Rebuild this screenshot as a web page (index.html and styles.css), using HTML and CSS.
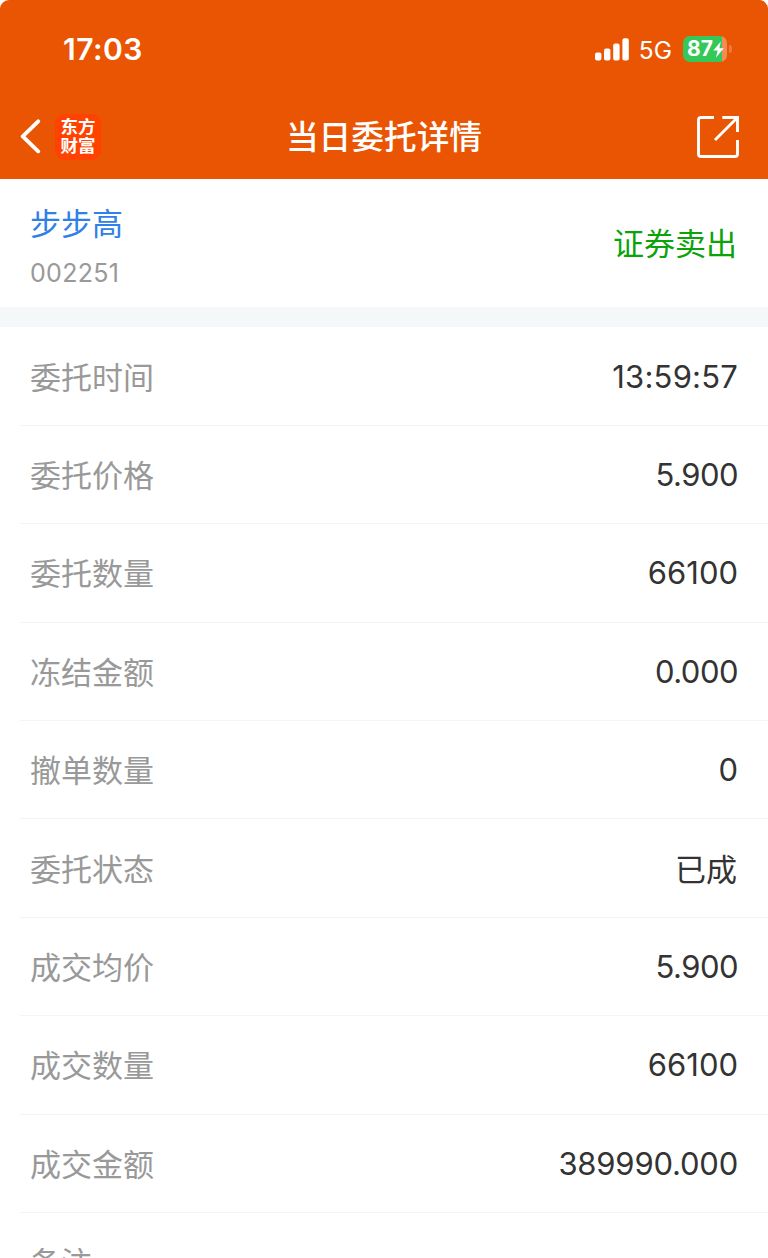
FILE: index.html
```html
<!DOCTYPE html>
<html lang="zh-CN">
<head>
	<meta charset="utf-8">
	<title>当日委托详情</title>

	<link rel="stylesheet" href="styles.css">
</head>
<body>
	<header class="header">
		<div class="status-bar">
			<span class="clock">17:03</span>
			<div class="indicators">
				<svg class="signal" width="34" height="23" viewBox="0 0 34 23" fill="#fff">
					<rect x="0" y="14.5" width="6.4" height="8" rx="2" />
					<rect x="9" y="10.5" width="6.4" height="12" rx="2" />
					<rect x="18.2" y="5.5" width="6.4" height="17" rx="2" />
					<rect x="27.4" y="0.3" width="6.4" height="22.2" rx="2" />
				</svg>
				<span class="network">5G</span>
				<div class="battery">
					<div class="battery-body">
						<span class="battery-level">87</span>
						<svg class="bolt" width="11" height="17" viewBox="0 0 11 17">
							<path d="M7.8 0.5 L0.3 9.6 H4.6 L3 16.5 L10.8 7.2 H6.4 Z" fill="#fff" />
						</svg>
					</div>
					<span class="battery-tip"></span>
				</div>
			</div>
		</div>
		<nav class="nav-bar">
			<div class="nav-left">
				<svg class="back" width="22" height="36" viewBox="0 0 22 36">
					<path d="M19.2 2.3 L3.7 17.3 L19.2 32.3" fill="none" stroke="#fff" stroke-width="3.9" stroke-linecap="round" stroke-linejoin="round" />
				</svg>
				<div class="logo"><span>东方</span><span>财富</span></div>
			</div>
			<h1 class="title">当日委托详情</h1>
			<svg class="share" width="42" height="42" viewBox="0 0 42 42" fill="none" stroke="#fff" stroke-width="2.9">
				<path d="M17 1.5 H4 Q1.5 1.5 1.5 4 V38 Q1.5 40.5 4 40.5 H38 Q40.5 40.5 40.5 38 V24" />
				<path d="M25.3 1.5 H40.5 V16" />
				<path d="M40 2 L18 24" />
			</svg>
		</nav>
	</header>

	<section class="stock">
		<div>
			<div class="stock-name">步步高</div>
			<div class="stock-code">002251</div>
		</div>
		<div class="direction">证券卖出</div>
	</section>

	<dl class="details">
		<div class="row"><dt>委托时间</dt><dd class="time">13:59:57</dd></div>
		<div class="row"><dt>委托价格</dt><dd class="decimal">5.900</dd></div>
		<div class="row"><dt>委托数量</dt><dd>66100</dd></div>
		<div class="row"><dt>冻结金额</dt><dd class="decimal">0.000</dd></div>
		<div class="row"><dt>撤单数量</dt><dd>0</dd></div>
		<div class="row"><dt>委托状态</dt><dd class="state">已成</dd></div>
		<div class="row"><dt>成交均价</dt><dd class="decimal">5.900</dd></div>
		<div class="row"><dt>成交数量</dt><dd>66100</dd></div>
		<div class="row"><dt>成交金额</dt><dd class="amount">389990.000</dd></div>
		<div class="row"><dt>备注</dt><dd></dd></div>
	</dl>
</body>
</html>
```
FILE: styles.css
```css
* {
	box-sizing: border-box;
}
body {
	margin: 0;
	height: 1258px;
	overflow: hidden;
	background-color: #fff;
	color: #333;
	font-family: Inter, "Noto Sans CJK SC", sans-serif;
}

.header {
	height: 179.4px;
	border-radius: 9px 9px 0 0;
	background-color: #ea5504;
	color: #fff;
}
.status-bar {
	display: flex;
	justify-content: space-between;
	align-items: center;
	height: 98px;
	padding: 0 36px 0 63px;
}
.clock {
	font-size: 30px;
	font-weight: 600;
	letter-spacing: 0.5px;
	line-height: 36px;
}
.indicators {
	display: flex;
	align-items: center;
}
.network {
	margin: 2px 0 0 10px;
	font-size: 24.5px;
	line-height: 28px;
}
.battery {
	display: flex;
	align-items: center;
	gap: 2px;
	margin-left: 11px;
}
.battery-body {
	display: flex;
	align-items: center;
	width: 44px;
	height: 26px;
	padding-left: 4px;
	border-radius: 7px;
	background: linear-gradient(to right, #34c759 39px, #f28b55 39px);
}
.battery-level {
	font-size: 21px;
	font-weight: 700;
	line-height: 26px;
}
.battery-tip {
	width: 3px;
	height: 8px;
	border-radius: 0 3px 3px 0;
	background-color: #ef7b3c;
}

.nav-bar {
	display: grid;
	grid-template-columns: 1fr auto 1fr;
	align-items: center;
	height: 78px;
	padding: 0 29px;
}
.nav-left {
	display: flex;
	align-items: center;
	gap: 14px;
	margin-left: -10px;
}
.logo {
	display: flex;
	flex-direction: column;
	align-items: center;
	justify-content: center;
	width: 46px;
	height: 46px;
	padding-bottom: 2px;
	border-radius: 9px;
	background-color: #ff4200;
	font-size: 17.5px;
	font-weight: 700;
	line-height: 19px;
}
.title {
	margin: 0;
	font-size: 32.7px;
	font-weight: 500;
	line-height: 40px;
}
.share {
	justify-self: end;
}

.stock {
	display: flex;
	justify-content: space-between;
	align-items: center;
	height: 128px;
	padding: 0 31px 0 30px;
}
.stock-name {
	padding-top: 11px;
	color: #2f80e7;
	font-size: 31px;
	line-height: 48px;
}
.stock-code {
	color: #999;
	font-size: 25px;
	letter-spacing: 0.3px;
	line-height: 50px;
}
.direction {
	padding-bottom: 4px;
	color: #0aa30a;
	font-size: 31px;
}

.details {
	margin: 0;
	border-top: 20px solid #f4f8f9;
}
.row {
	display: flex;
	justify-content: space-between;
	align-items: center;
	height: 98.4px;
	margin-left: 20px;
	padding: 0 30px 0 10px;
	border-bottom: 1px solid #f4f4f4;
}
.row dt {
	padding-bottom: 2px;
	color: #999;
	font-size: 31px;
}
.row dd {
	margin: 0;
	font-size: 31px;
}
.row .state {
	padding: 0 1px 2px 0;
}
.row .time {
	letter-spacing: 0.2px;
}
.row .decimal {
	letter-spacing: -0.5px;
}
.row .amount {
	letter-spacing: -0.2px;
}
```
